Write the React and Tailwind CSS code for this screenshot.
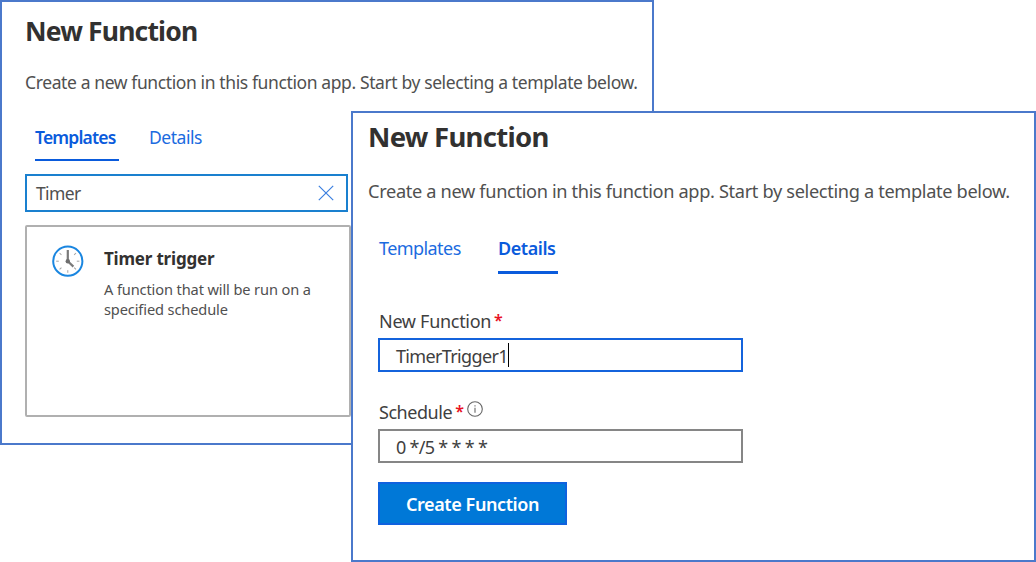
function Tab({ className, children }) {
  return <div className={`shrink-0 whitespace-nowrap leading-[25px] ${className}`}>{children}</div>;
}

function ClockIcon() {
  const ticks = [45, 90, 135, 180, 225, 270, 315];
  return (
    <svg className="-mt-px h-8 w-8 shrink-0" viewBox="0 0 32 32" fill="none">
      <circle cx="15.8" cy="16.2" r="14.6" stroke="#1a86e0" strokeWidth="2" />
      {ticks.map((angle) => (
        <path key={angle} d="M15.8 4.6v2.6" stroke="#a3a3a3" strokeWidth="1" transform={`rotate(${angle} 15.8 16.2)`} />
      ))}
      <path d="M15.8 5v11" stroke="#7a7a7a" strokeWidth="2.2" />
      <path d="M15.8 16.2l5.6 5.4" stroke="#7a7a7a" strokeWidth="2.2" />
      <circle cx="15.8" cy="16.2" r="2.2" fill="#6e6e6e" />
    </svg>
  );
}

function TemplatesPanel() {
  return (
    <section className="absolute left-0 top-0 flex h-[445px] w-[654px] flex-col border-2 border-[#4b79cb] bg-white pl-[23px] pt-[13px]">
      <h1 className="whitespace-nowrap text-[26.5px] font-bold leading-8 tracking-[-0.83px] text-[#323130]">New Function</h1>
      <p className="mt-[23px] whitespace-nowrap text-[17.5px] leading-[25px] tracking-[-0.39px] text-[#505050]">
        Create a new function in this function app. Start by selecting a template below.
      </p>
      <nav className="mt-[30px] flex h-9 pl-[10px] text-[17.5px] text-[#1b6be0]">
        <Tab className="w-[84px] border-b-2 border-[#0a5bdc] font-semibold tracking-[-0.82px] text-[#0a5bdc]">Templates</Tab>
        <Tab className="ml-[30px] tracking-[-0.45px]">Details</Tab>
      </nav>
      <div className="mt-[13px] flex h-[38px] w-[323px] items-center justify-between border-2 border-[#1a80cf] pl-[9px] pr-[12px]">
        <span className="text-[17.5px] leading-6 tracking-[-0.65px] text-[#505050]">Timer</span>
        <svg className="h-4 w-4" viewBox="0 0 16 16" stroke="#3b7fe0" strokeWidth="1.2">
          <path d="M.8 .8l14.4 14.4M15.2 .8L.8 15.2" />
        </svg>
      </div>
      <div className="mt-[13px] flex h-[192px] w-[326px] rounded-[2px] border-2 border-[#b0b0b0] pl-[25px] pt-[19px]">
        <ClockIcon />
        <div className="ml-5 whitespace-nowrap">
          <h2 className="text-[17px] font-bold leading-[25px] tracking-[-0.2px] text-[#323130]">Timer trigger</h2>
          <p className="mt-[8px] text-[14.6px] leading-5 tracking-[-0.12px] text-[#505050]">
            A function that will be run on a<br />
            specified schedule
          </p>
        </div>
      </div>
    </section>
  );
}

function DetailsPanel() {
  return (
    <section className="absolute left-[351px] top-[111px] flex h-[451px] w-[685px] flex-col border-2 border-[#4b79cb] bg-white pl-[15px] pt-[8px]">
      <h1 className="whitespace-nowrap text-[27.5px] font-bold leading-8 tracking-[-0.72px] text-[#323130]">New Function</h1>
      <p className="mt-[26px] whitespace-nowrap text-[18.2px] leading-6 tracking-[-0.34px] text-[#505050]">
        Create a new function in this function app. Start by selecting a template below.
      </p>
      <nav className="mt-[33px] flex h-[38px] pl-[11px] text-[18px] text-[#1b6be0]">
        <Tab className="w-[82px] tracking-[-0.57px]">Templates</Tab>
        <Tab className="ml-[37px] w-[60px] border-b-3 border-[#0a5bdc] font-semibold tracking-[-0.45px] text-[#0a5bdc]">Details</Tab>
      </nav>
      <div className="mt-[35px] flex flex-col items-start pl-[10px] text-[18px] leading-6 tracking-[-0.3px] text-[#404040]">
        <div className="flex h-6 whitespace-nowrap pl-px">
          <span>New Function</span>
          <span className="ml-[3px] text-base font-semibold leading-[22px] text-[#e81123]">*</span>
        </div>
        <div className="mt-[5px] flex h-[34px] w-[365px] items-center border-2 border-[#1463dc] pl-4">
          <span className="pt-px tracking-[-0.65px]">TimerTrigger1</span>
          <span className="h-6 w-px bg-black" />
        </div>
        <div className="mt-[28px] flex h-6 whitespace-nowrap pl-px">
          <span className="tracking-[-0.45px]">Schedule</span>
          <span className="ml-[3px] text-base font-semibold leading-[22px] text-[#e81123]">*</span>
          <svg className="ml-[3px] mt-[1px] h-4 w-4" viewBox="0 0 16 16" fill="none" stroke="#666666">
            <circle cx="8" cy="8" r="7.3" strokeWidth="1.1" />
            <path d="M8 6.7v5M8 4.2v1.3" strokeWidth="1.1" />
          </svg>
        </div>
        <div className="mt-[5px] flex h-[34px] w-[365px] items-center border-2 border-[#868686] pl-4">
          <span className="pt-px tracking-[-0.7px]">0 */5 * * * *</span>
        </div>
        <button className="mt-[19px] flex h-[43px] w-[189px] items-center justify-center whitespace-nowrap border-2 border-[#0f62de] bg-[#0078d7] pt-px font-semibold tracking-[-0.4px] text-white">
          Create Function
        </button>
      </div>
    </section>
  );
}

export default function App() {
  return (
    <main className="relative h-[562px] w-[1036px] overflow-hidden bg-white font-['Noto_Sans','Open_Sans',sans-serif]">
      <TemplatesPanel />
      <DetailsPanel />
    </main>
  );
}
